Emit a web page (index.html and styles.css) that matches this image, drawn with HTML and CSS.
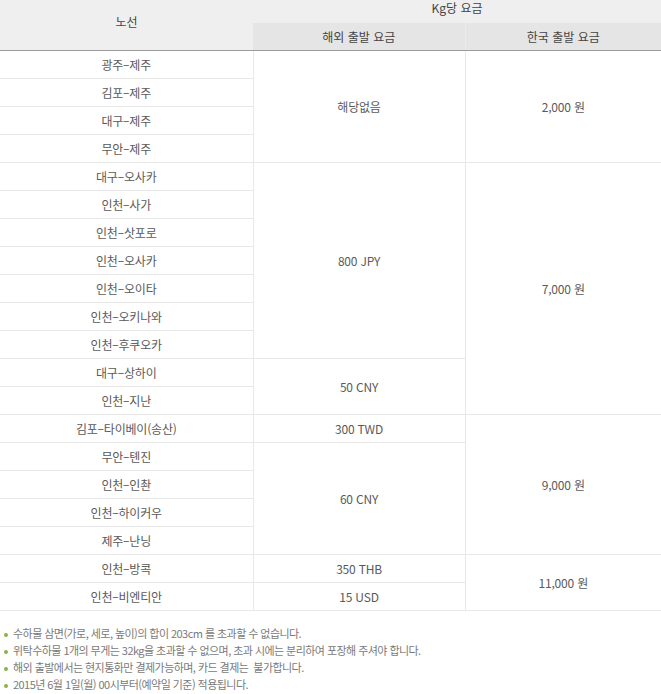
FILE: index.html
```html
<!DOCTYPE html>
<html lang="ko">
<head>
<meta charset="utf-8">
<link rel="stylesheet" href="styles.css">
</head>
<body>
<table class="fare">
  <colgroup>
    <col class="c1"><col class="c2"><col class="c3">
  </colgroup>
  <thead>
    <tr class="h1">
      <th rowspan="2" class="route-h">노선</th>
      <th colspan="2" class="kg-h">Kg당 요금</th>
    </tr>
    <tr class="h2">
      <th class="sub">해외 출발 요금</th>
      <th class="sub">한국 출발 요금</th>
    </tr>
  </thead>
  <tbody>
    <tr><td>광주–제주</td><td rowspan="4">해당없음</td><td rowspan="4">2,000 원</td></tr>
    <tr><td>김포–제주</td></tr>
    <tr><td>대구–제주</td></tr>
    <tr><td>무안–제주</td></tr>
    <tr><td>대구–오사카</td><td rowspan="7">800 JPY</td><td rowspan="9">7,000 원</td></tr>
    <tr><td>인천–사가</td></tr>
    <tr><td>인천–삿포로</td></tr>
    <tr><td>인천–오사카</td></tr>
    <tr><td>인천–오이타</td></tr>
    <tr><td>인천–오키나와</td></tr>
    <tr><td>인천–후쿠오카</td></tr>
    <tr><td>대구–상하이</td><td rowspan="2">50 CNY</td></tr>
    <tr><td>인천–지난</td></tr>
    <tr><td>김포–타이베이(송산)</td><td>300 TWD</td><td rowspan="5">9,000 원</td></tr>
    <tr><td>무안–톈진</td><td rowspan="4">60 CNY</td></tr>
    <tr><td>인천–인촨</td></tr>
    <tr><td>인천–하이커우</td></tr>
    <tr><td>제주–난닝</td></tr>
    <tr><td>인천–방콕</td><td>350 THB</td><td rowspan="2">11,000 원</td></tr>
    <tr><td>인천–비엔티안</td><td>15 USD</td></tr>
  </tbody>
</table>
<ul class="notes">
  <li>수하물 삼면(가로, 세로, 높이)의 합이 203cm 를 초과할 수 없습니다.</li>
  <li>위탁수하물 1개의 무게는 32kg을 초과할 수 없으며, 초과 시에는 분리하여 포장해 주셔야 합니다.</li>
  <li>해외 출발에서는 현지통화만 결제가능하며, 카드 결제는&nbsp; 불가합니다.</li>
  <li>2015년 6월 1일(월) 00시부터(예약일 기준) 적용됩니다.</li>
</ul>
</body>
</html>
```
FILE: styles.css
```css
html, body {
  margin: 0;
  padding: 0;
  background: #ffffff;
}
body {
  font-family: "Noto Sans CJK KR", "Liberation Sans", sans-serif;
  color: #5a5a5a;
}
.fare {
  width: 661px;
  border-collapse: collapse;
  table-layout: fixed;
}
.c1 { width: 253px; }
.c2 { width: 212px; }
.c3 { width: 196px; }

.fare th {
  font-weight: normal;
  font-size: 12px;
  color: #444444;
  padding: 0;
  text-align: center;
}
.h1 th {
  height: 23px;
}
.route-h {
  background: #efefef;
  vertical-align: top;
  padding-top: 13px !important;
  line-height: 17px;
  border-bottom: 1px solid #9a9a9a;
}
.kg-h {
  background: #efefef;
  vertical-align: top;
  line-height: 16px;
}
.h2 th {
  height: 27px;
  background: #e5e5e5;
  line-height: 17px;
  border-bottom: 1px solid #9a9a9a;
  vertical-align: middle;
}
.h2 th + th {
  border-left: 1px solid #ececec;
}
.fare td {
  height: 27px;
  padding: 0;
  font-size: 12px;
  line-height: 16px;
  text-align: center;
  vertical-align: middle;
  border-bottom: 1px solid #e8e8e8;
  border-left: 1px solid #e8e8e8;
  color: #5a5a5a;
  letter-spacing: -0.2px;
}
.fare td:first-child {
  border-left: none;
}

.notes {
  list-style: none;
  margin: 14px 0 0 0;
  padding: 0 0 0 13px;
  font-size: 11px;
  line-height: 17px;
  color: #7a7a7a;
  letter-spacing: -0.55px;
}
.notes li {
  position: relative;
}
.notes li::before {
  content: "";
  position: absolute;
  left: -9px;
  top: 8px;
  width: 4px;
  height: 4px;
  border-radius: 50%;
  background: #8ab544;
}
```
